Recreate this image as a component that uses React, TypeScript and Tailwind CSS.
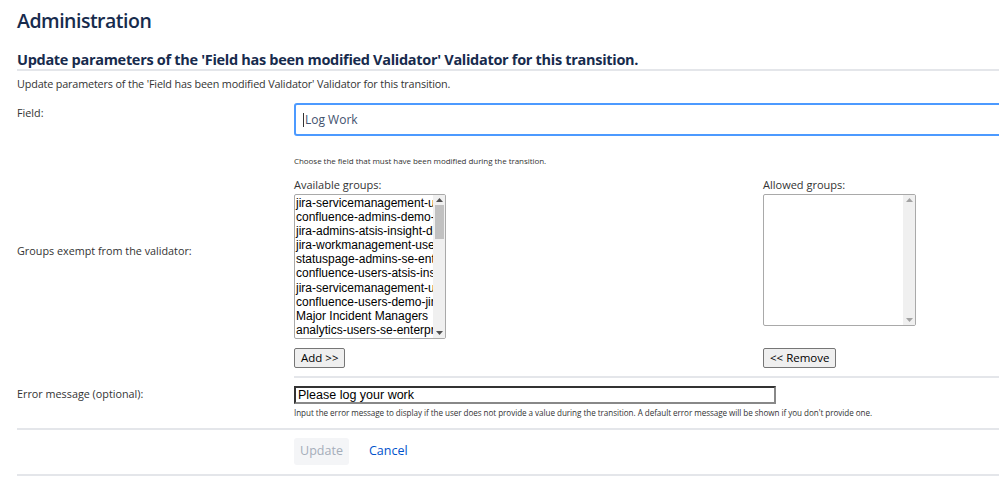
import React from "react";

const groups = [
  "jira-servicemanagement-users",
  "confluence-admins-demo-jira",
  "jira-admins-atsis-insight-demo",
  "jira-workmanagement-users",
  "statuspage-admins-se-enterprise",
  "confluence-users-atsis-insight",
  "jira-servicemanagement-users-x",
  "confluence-users-demo-jira",
  "Major Incident Managers",
  "analytics-users-se-enterprise",
];

function Arrow({ up, dark }: { up?: boolean; dark?: boolean }) {
  return (
    <svg width="7" height="4" viewBox="0 0 7 4" className="block">
      <polygon
        points={up ? "0,4 7,4 3.5,0" : "0,0 7,0 3.5,4"}
        fill={dark ? "#505050" : "#a3a3a3"}
      />
    </svg>
  );
}

export default function App() {
  return (
    <div className="w-[999px] h-[496px] overflow-hidden bg-white">
      <div className="w-[1060px] pl-[17px] font-['Open_Sans',sans-serif] text-[#172b4d]">
        <h1 className="text-[19.5px] leading-[24px] pt-[9px] font-semibold tracking-[-0.5px]">Administration</h1>
        <h2 className="mt-[18px] w-[982px] text-[14.5px] leading-[18px] font-bold border-b-2 border-[#e4e6ea] pb-0 tracking-[-0.3px]">
          Update parameters of the 'Field has been modified Validator' Validator for this transition.
        </h2>
        <p className="mt-[6px] text-[10.8px] leading-[14px] text-[#333] tracking-[-0.15px]">
          Update parameters of the 'Field has been modified Validator' Validator for this transition.
        </p>

        {/* Field row */}
        <div className="flex mt-[12px]">
          <div className="w-[277px] shrink-0 pt-[3px] text-[10.8px] leading-[14px] text-[#333]">Field:</div>
          <div className="flex-1">
            <div className="h-[33px] w-[740px] border-2 border-[#4c9aff] rounded-[3px] flex items-center pl-[7px] text-[12px] text-[#42526e]">
              <span className="w-px h-[14px] bg-[#333] mr-px" />
              Log Work
            </div>
            <div className="mt-[19px] text-[8px] leading-[11px] text-[#333] tracking-[-0.05px]">
              Choose the field that must have been modified during the transition.
            </div>
          </div>
        </div>

        {/* Groups row */}
        <div className="flex mt-[12px]">
          <div className="w-[277px] shrink-0 pt-[66px] text-[10.8px] leading-[14px] text-[#333]">
            Groups exempt from the validator:
          </div>
          <div className="flex gap-[317px] w-[705px] border-b-2 border-[#e4e6ea] pb-[8px]">
            <div>
              <div className="text-[11px] leading-[13px] text-[#333]">Available groups:</div>
              <div className="mt-[3px] w-[152px] h-[145px] border border-[#a9a9a9] rounded-[2px] flex overflow-hidden">
                <div className="flex-1 overflow-hidden pl-[1px] pt-[1px] font-['Liberation_Sans',Arial,sans-serif] text-[12px] leading-[14.1px] text-black">
                  {groups.map((g) => (
                    <div key={g} className="whitespace-nowrap">{g}</div>
                  ))}
                </div>
                <div className="w-[12px] bg-[#f0f0f0] flex flex-col items-center">
                  <div className="h-[10px] flex items-center"><Arrow up dark /></div>
                  <div className="w-[9px] h-[34px] bg-[#c1c1c1]" />
                  <div className="flex-1" />
                  <div className="h-[10px] flex items-center"><Arrow dark /></div>
                </div>
              </div>
              <button className="mt-[9px] h-[20px] px-[6px] border border-[#767676] bg-[#efefef] rounded-[2px] text-[11.5px] leading-[16px] text-black">
                Add &gt;&gt;
              </button>
            </div>
            <div>
              <div className="text-[11px] leading-[13px] text-[#333]">Allowed groups:</div>
              <div className="mt-[3px] w-[153px] h-[132px] border border-[#a9a9a9] rounded-[2px] flex overflow-hidden">
                <div className="flex-1" />
                <div className="w-[12px] bg-[#f0f0f0] flex flex-col items-center">
                  <div className="h-[10px] flex items-center"><Arrow up /></div>
                  <div className="flex-1" />
                  <div className="h-[10px] flex items-center"><Arrow /></div>
                </div>
              </div>
              <button className="mt-[22px] h-[20px] px-[6px] border border-[#767676] bg-[#efefef] rounded-[2px] text-[11.5px] leading-[16px] text-black">
                &lt;&lt; Remove
              </button>
            </div>
          </div>
        </div>

        {/* Error message row */}
        <div className="flex w-[982px] border-b-2 border-[#e4e6ea] pt-[8px] pb-[10px]">
          <div className="w-[277px] shrink-0 pt-[1px] text-[10.8px] leading-[14px] text-[#333]">Error message (optional):</div>
          <div className="flex-1">
            <div className="w-[482px] h-[18px] border-2 border-t-[#333] border-l-[#333] border-b-[#888] border-r-[#888] flex items-center pl-[2px] font-['Liberation_Sans',Arial,sans-serif] text-[12.5px] text-black">
              Please log your work
            </div>
            <div className="mt-[3px] text-[8.1px] leading-[11px] text-[#333] tracking-[-0.05px]">
              Input the error message to display if the user does not provide a value during the transition. A default error message will be shown if you don't provide one.
            </div>
          </div>
        </div>

        {/* Buttons row */}
        <div className="flex w-[982px] border-b-2 border-[#e4e6ea] pt-[8px] pb-[9px]">
          <div className="w-[277px] shrink-0" />
          <div className="flex items-center">
            <div className="h-[27px] w-[55px] bg-[#f4f5f7] rounded-[3px] flex items-center justify-center text-[12.5px] text-[#a5adba]">
              Update
            </div>
            <span className="ml-[20px] text-[12.5px] text-[#0052cc]">Cancel</span>
          </div>
        </div>
      </div>
    </div>
  );
}
